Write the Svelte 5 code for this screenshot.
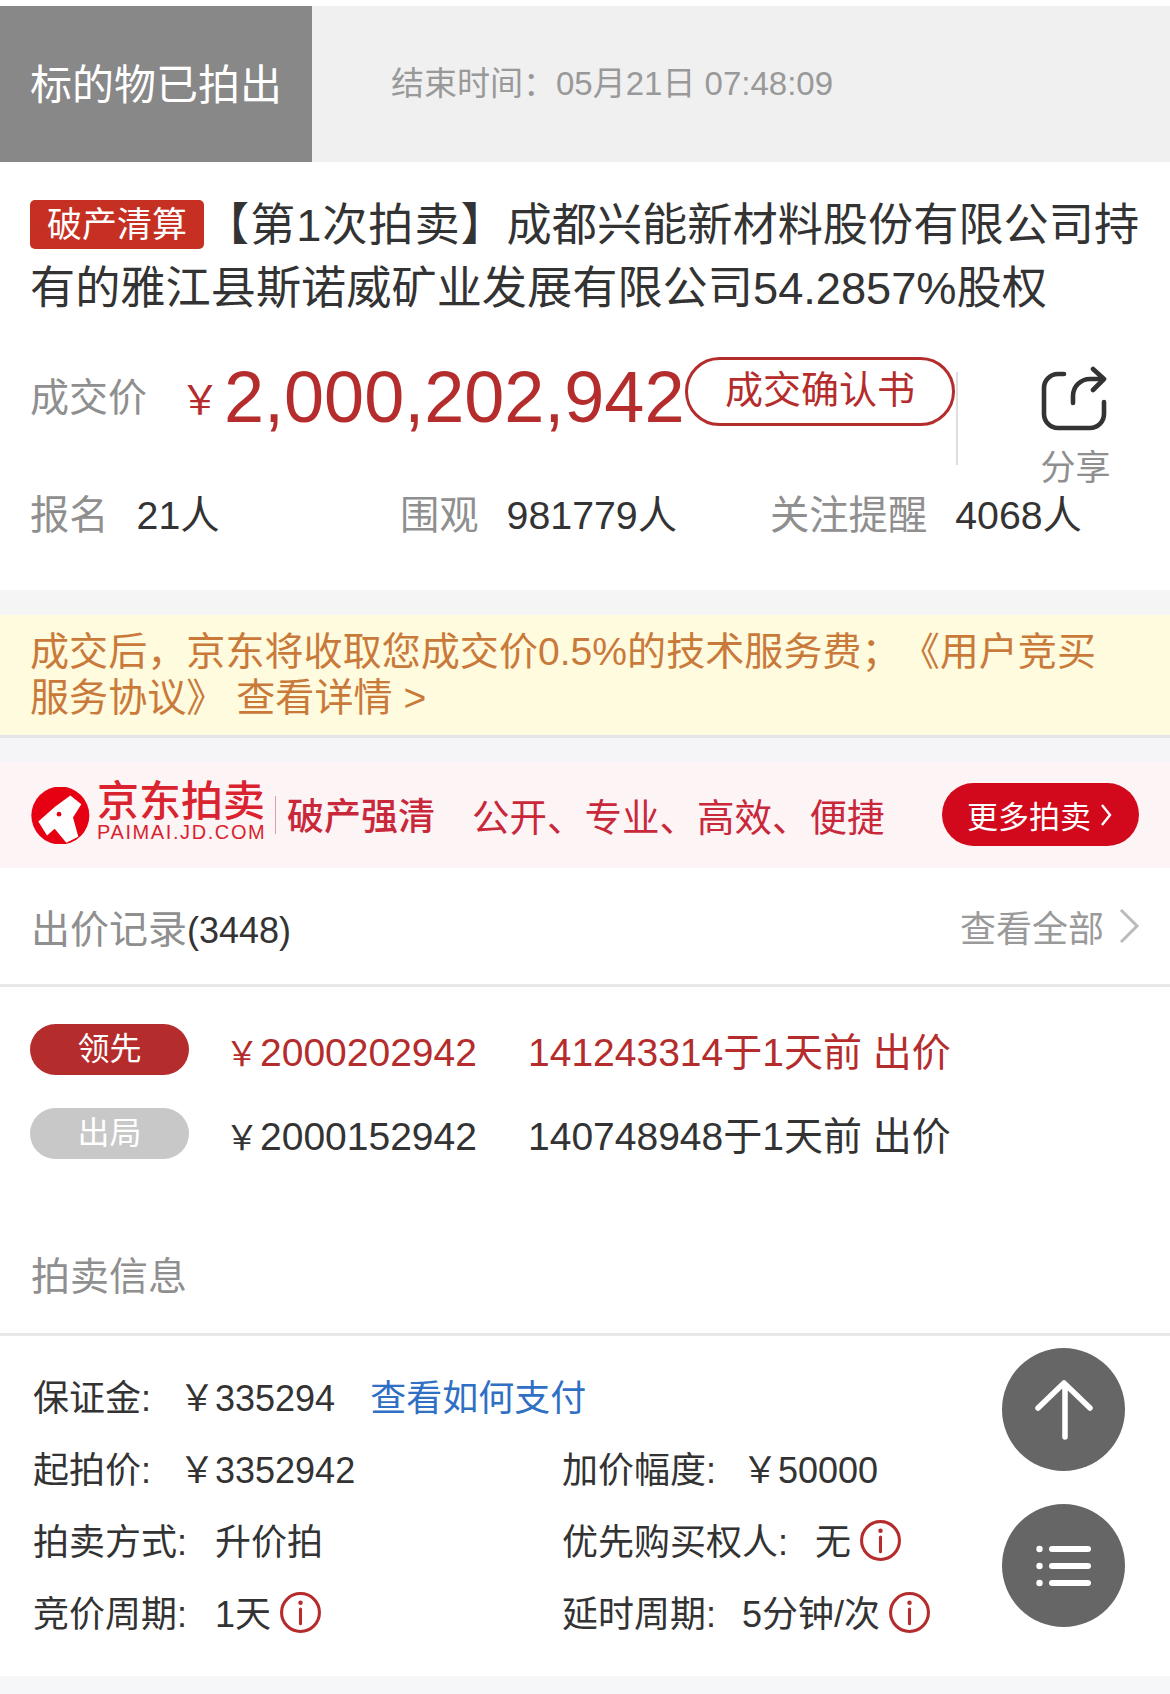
<script>
  // static auction detail page, bid rows + info rows kept as data
  const bids = [
    { tag: '领先', price: '2000202942', who: '141243314于1天前 出价', lead: true },
    { tag: '出局', price: '2000152942', who: '140748948于1天前 出价', lead: false },
  ]
</script>

{#snippet info()}
  <svg class="info" viewBox="0 0 42 42" aria-hidden="true">
    <circle cx="21" cy="21" r="18.5" fill="none" stroke="#b52c2c" stroke-width="3" />
    <circle cx="21" cy="11.5" r="2.2" fill="#b52c2c" />
    <path d="M21 17.5V32" stroke="#b52c2c" stroke-width="3" stroke-linecap="round" />
  </svg>
{/snippet}

<div class="page">
  <div class="status">
    <div class="sold">标的物已拍出</div>
    <div class="end">结束时间：05月21日 07:48:09</div>
  </div>

  <section class="main">
    <h1 class="title"><span class="tag">破产清算</span><span class="bracket">【第1次拍卖】</span>成都兴能新材料股份有限公司持有的雅江县斯诺威矿业发展有限公司54.2857%股权</h1>

    <div class="price-row">
      <span class="muted price-label">成交价</span>
      <span class="yen">￥</span>
      <span class="amount">2,000,202,942</span>
      <span class="confirm">成交确认书</span>
      <span class="divider"></span>
      <div class="share">
        <svg viewBox="0 0 72 70" aria-hidden="true">
          <path d="M25 8H19a14 14 0 0 0-14 14V48a14 14 0 0 0 14 14H51a14 14 0 0 0 14-14V36" />
          <path d="M34 37V30a17 17 0 0 1 17-17H65M54 3L65 13L54 24" />
        </svg>
        <span>分享</span>
      </div>
    </div>

    <div class="stats">
      <div class="stat s1"><span class="muted">报名</span><b>21人</b></div>
      <div class="stat s2"><span class="muted">围观</span><b>981779人</b></div>
      <div class="stat"><span class="muted">关注提醒</span><b>4068人</b></div>
    </div>
  </section>

  <div class="notice">成交后，京东将收取您成交价0.5%的技术服务费；《用户竞买服务协议》 查看详情 &gt;</div>

  <div class="banner">
    <svg class="logo" viewBox="94 75 177 170" aria-hidden="true">
      <circle cx="182" cy="160" r="87" fill="#e60012" />
      <path d="M116 178L166 134L212 100L245 126L220 166L236 224L200 242L165 200L142 220Z" fill="#fff" />
      <circle cx="178" cy="156" r="7" fill="#e60012" />
    </svg>
    <div class="brand">
      <span class="cn">京东拍卖</span>
      <span class="en">PAIMAI.JD.COM</span>
    </div>
    <span class="brand-sep"></span>
    <span class="bank">破产强清</span>
    <span class="slogan">公开、专业、高效、便捷</span>
    <span class="more">更多拍卖
      <svg viewBox="0 0 12 24" aria-hidden="true"><path d="M2 2L10 12L2 22" /></svg>
    </span>
  </div>

  <section class="records">
    <div class="head">
      <span><span class="muted">出价记录</span><span class="count">(3448)</span></span>
      <span class="all">查看全部
        <svg viewBox="0 0 20 36" aria-hidden="true"><path d="M2 2L18 18L2 34" /></svg>
      </span>
    </div>
    <div class="bids">
      {#each bids as b}
        <div class="bid" class:lead={b.lead}>
          <span class="pill">{b.tag}</span>
          <div class="bid-text">
            <span class="bid-price"><small>￥</small>{b.price}</span>
            <span class="who">{b.who}</span>
          </div>
        </div>
      {/each}
    </div>
  </section>

  <section class="details">
    <div class="section-title muted">拍卖信息</div>
    <div class="grid">
      <div class="cell"><span class="k w3">保证金:</span><span>￥335294</span><span class="pay">查看如何支付</span></div>
      <div class="cell"></div>
      <div class="cell"><span class="k w3">起拍价:</span><span>￥3352942</span></div>
      <div class="cell"><span class="k w4b">加价幅度:</span><span>￥50000</span></div>
      <div class="cell"><span class="k w4">拍卖方式:</span><span>升价拍</span></div>
      <div class="cell"><span class="k w6">优先购买权人:</span><span>无</span>{@render info()}</div>
      <div class="cell"><span class="k w4">竞价周期:</span><span>1天</span>{@render info()}</div>
      <div class="cell"><span class="k w4c">延时周期:</span><span>5分钟/次</span>{@render info()}</div>
    </div>
  </section>

  <div class="foot"></div>

  <button class="float up" aria-label="回到顶部">
    <svg viewBox="0 0 60 60"><path d="M3 28L29 3L55 28M30 5V57" /></svg>
  </button>
  <button class="float menu" aria-label="菜单">
    <svg viewBox="0 0 56 42">
      <circle cx="3.5" cy="4" r="3.2" /><circle cx="3.5" cy="21" r="3.2" /><circle cx="3.5" cy="38" r="3.2" />
      <rect x="13" y="1" width="42" height="6" rx="3" /><rect x="13" y="18" width="42" height="6" rx="3" /><rect x="13" y="35" width="42" height="6" rx="3" />
    </svg>
  </button>
</div>

<style>
  :global(body) { margin: 0; background: #fff; }
  .page {
    position: relative; width: 1170px; height: 1694px; overflow: hidden; padding-top: 6px; box-sizing: border-box;
    font-family: "Liberation Sans", "Noto Sans CJK SC", sans-serif; color: #333; background: #fff;
    text-spacing-trim: space-all;
  }
  .muted { color: #8f8f8f; }

  .status { display: flex; height: 156px; background: #f0f0f0; align-items: center; }
  .sold { box-sizing: border-box; width: 312px; height: 100%; padding-bottom: 6px; background: #888; color: #fff; font-size: 42px; display: flex; align-items: center; justify-content: center; flex: none; }
  .end { margin: 0 0 6px 79px; font-size: 33px; color: #999; }

  .main { padding: 33px 26px 0 30px; height: 428px; box-sizing: border-box; }
  .title { margin: 0; font-size: 45.2px; line-height: 62.5px; font-weight: 400; color: #333; }
  .tag { display: inline-block; width: 174px; height: 49px; line-height: 49px; text-align: center; vertical-align: 4px; background: #c63023; color: #fff; font-size: 35px; border-radius: 5px; }
  .bracket { letter-spacing: 0.9px; }

  .price-row { display: flex; align-items: flex-start; margin-top: 43px; height: 124px; }
  .price-label { font-size: 39px; line-height: 54px; margin-top: 8px; width: 150px; flex: none; }
  .yen { font-size: 40px; color: #b52c2c; margin-top: 10px; width: 44px; flex: none; line-height: 54px; }
  .amount { font-size: 72px; line-height: 80px; color: #b52c2c; width: 461px; flex: none; margin-top: -6px; }
  .confirm { box-sizing: border-box; width: 270px; height: 69px; border: 3px solid #b52c2c; border-radius: 35px; color: #b52c2c; font-size: 38px; text-align: center; line-height: 61px; flex: none; margin-top: -6px; }
  .divider { width: 2px; height: 93px; background: #ddd; margin: 9px 0 0 1px; flex: none; }
  .share { flex: none; width: 110px; margin: 3px 0 0 62px; text-align: center; color: #8f8f8f; font-size: 35px; line-height: 40px; }
  .share svg { display: block; width: 72px; height: 70px; margin: 0 auto 12px; fill: none; stroke: #333; stroke-width: 4.6; stroke-linecap: round; stroke-linejoin: round; }
  .share span { display: block; white-space: nowrap; margin-left: 1px; }

  .stats { display: flex; margin-top: 3px; font-size: 39.3px; line-height: 50px; }
  .stat { display: flex; gap: 28px; }
  .stat b { font-weight: 400; color: #333; }
  .s1 { width: 370px; }
  .s2 { width: 370px; }

  .notice { border-top: 25px solid #f5f5f5; border-bottom: 3px solid #e4e4e8; background: #fffbdf; padding: 14px 60px 0 30px; height: 106px; color: #c97a3a; font-size: 39.1px; line-height: 46px; }

  .banner { display: flex; align-items: center; height: 106px; border-top: 24px solid #f5f5f7; background: #fdf4f6; padding-left: 31px; position: relative; color: #c8283a; }
  .logo { width: 59px; height: 57px; flex: none; }
  .brand { display: flex; flex-direction: column; margin: -4px 0 0 7px; color: #d9232e; width: 170px; }
  .brand .cn { font-size: 42px; line-height: 38px; white-space: nowrap; font-weight: 500; }
  .brand .en { font-size: 20px; line-height: 22px; letter-spacing: 1.6px; white-space: nowrap; }
  .brand-sep { width: 1px; height: 38px; background: #d8a0a8; margin-left: 8px; flex: none; }
  .bank { font-size: 37px; margin: -2px 0 0 11px; font-weight: 500; white-space: nowrap; }
  .slogan { font-size: 37.5px; margin: -2px 0 0 37px; white-space: nowrap; }
  .more { position: absolute; left: 942px; top: 21px; width: 197px; height: 63px; box-sizing: border-box; border-radius: 32px; background: #d2091c; color: #fff; font-size: 31px; display: flex; align-items: center; padding-left: 25px; gap: 9px; white-space: nowrap; }
  .more svg { width: 12px; height: 24px; fill: none; stroke: #fff; stroke-width: 2.4; }

  .head { display: flex; justify-content: space-between; align-items: center; height: 119px; padding: 0 30px 0 31px; font-size: 39px; border-bottom: 3px solid #e8e8e8; box-sizing: border-box; }
  .count { font-size: 36px; }
  .all { display: flex; align-items: center; color: #9a9a9a; font-size: 36px; gap: 14px; }
  .all svg { width: 22px; height: 36px; fill: none; stroke: #bbb; stroke-width: 3; }
  .bids { padding: 37px 0 0 30px; display: grid; gap: 33px; height: 264px; align-content: start; box-sizing: border-box; }
  .bid { display: flex; align-items: center; height: 51px; font-size: 39px; color: #333; }
  .bid.lead { color: #b52c2c; }
  .pill { width: 159px; height: 51px; border-radius: 26px; background: #c8c8c8; color: #fff; font-size: 32px; text-align: center; line-height: 50px; flex: none; }
  .lead .pill { background: #b52c2c; }
  .bid-text { display: flex; align-items: baseline; margin-top: -2px; }
  .bid-price { margin-left: 36px; width: 303px; flex: none; }
  .bid-price small { font-size: 34px; margin-right: 1px; }
  .who { white-space: nowrap; }

  .section-title { height: 85px; padding-left: 31px; font-size: 39px; line-height: 52px; box-sizing: border-box; border-bottom: 3px solid #e8e8e8; }
  .grid { display: grid; grid-template-columns: 529px 1fr; grid-auto-rows: 72px; padding: 23px 0 0 33px; height: 340px; box-sizing: border-box; }
  .cell { display: flex; align-items: center; font-size: 36px; color: #333; white-space: nowrap; }
  .k { flex: none; }
  .w3 { width: 146px; }
  .w4 { width: 182px; }
  .w4b { width: 180px; }
  .w4c { width: 180px; }
  .w6 { width: 253px; }
  .pay { color: #2f6fc4; margin-left: 35px; }
  .info { width: 43px; height: 43px; margin: 2px 0 0 8px; flex: none; }

  .foot { height: 19px; background: #f6f7f9; }

  .float { position: absolute; left: 1002px; width: 123px; height: 123px; padding: 0; border: 0; border-radius: 50%; background: #666; display: flex; align-items: center; justify-content: center; }
  .up { top: 1348px; }
  .up svg { width: 60px; height: 60px; margin-left: 2px; fill: none; stroke: #fff; stroke-width: 5.5; stroke-linecap: round; stroke-linejoin: round; }
  .menu { top: 1504px; }
  .menu svg { width: 56px; height: 42px; fill: #fff; }
</style>
